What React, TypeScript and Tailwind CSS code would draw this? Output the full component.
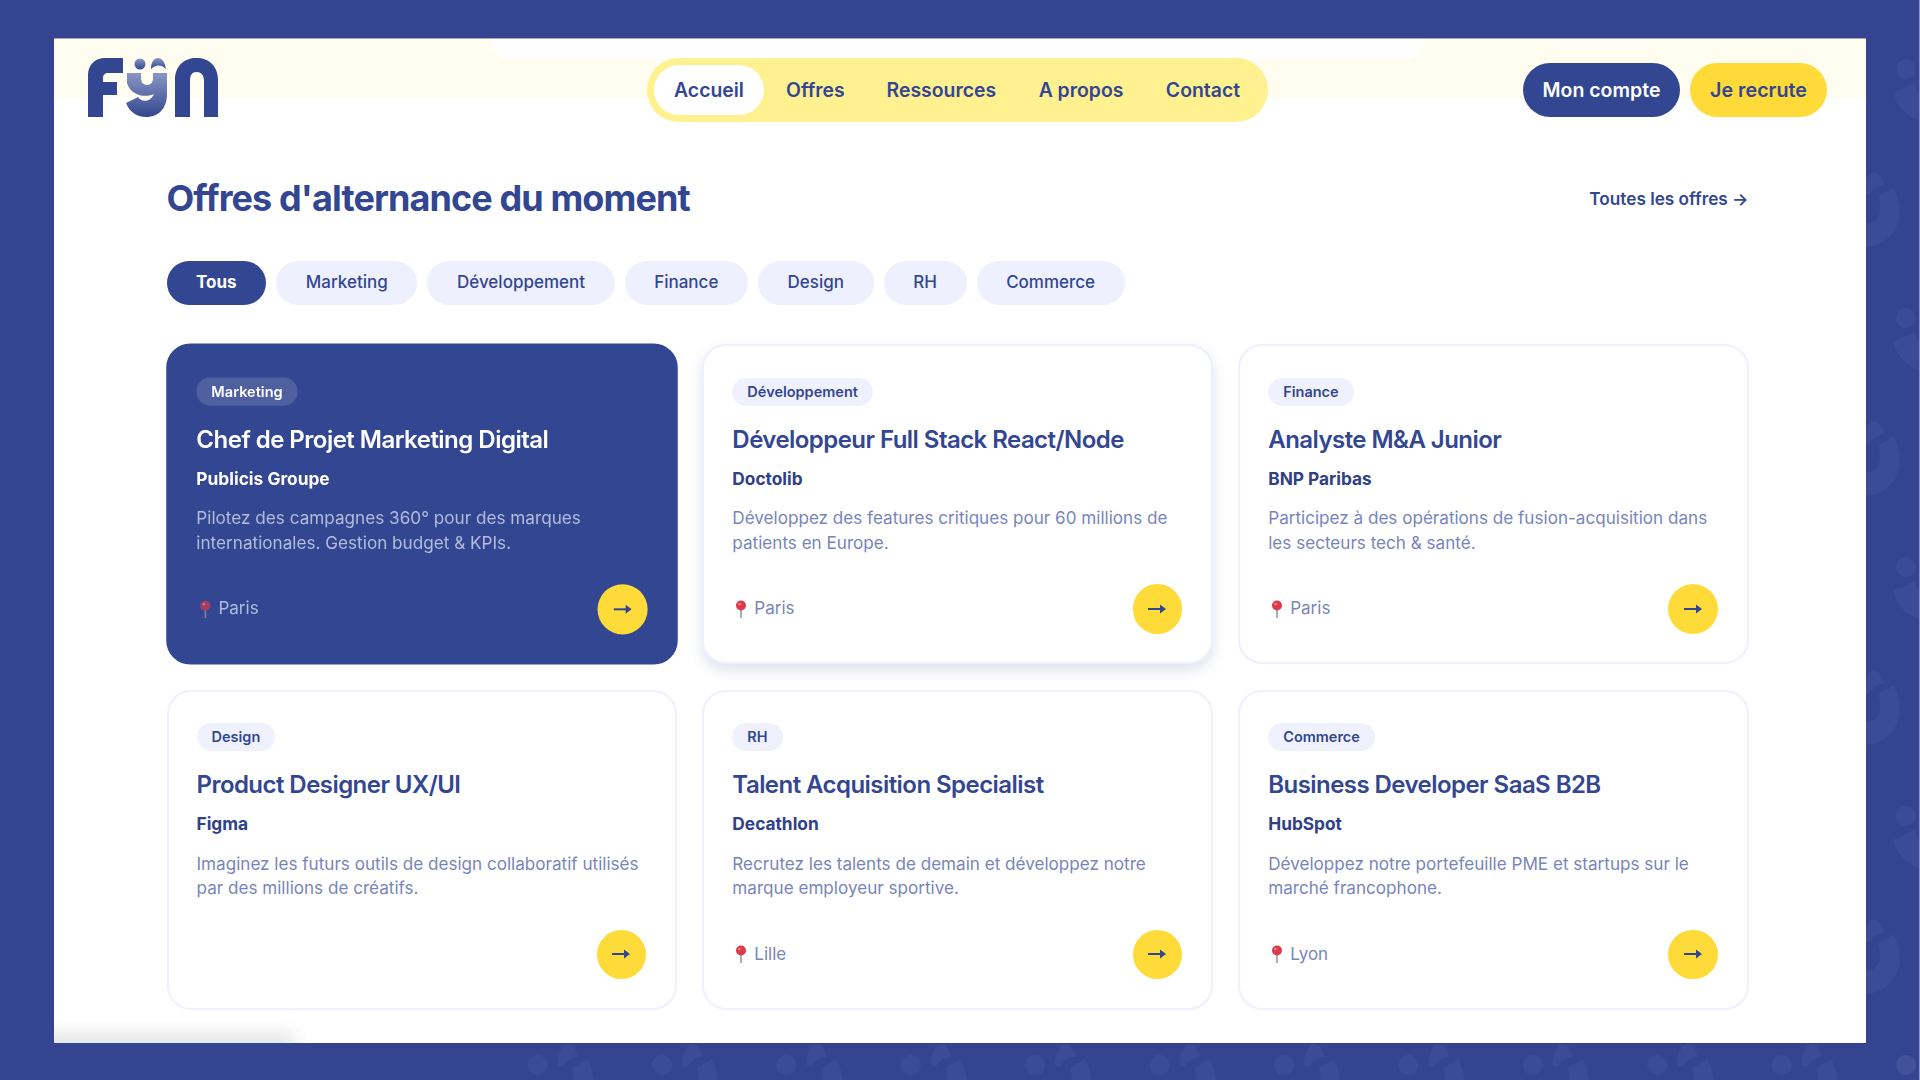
const sans = "font-['Inter','Liberation_Sans',sans-serif]";

const filters = ['Tous', 'Marketing', 'Développement', 'Finance', 'Design', 'RH', 'Commerce'];

type Job = { tag: string; title: string; company: string; desc: [string, string]; city?: string };

const jobs: Job[] = [
  { tag: 'Marketing', title: 'Chef de Projet Marketing Digital', company: 'Publicis Groupe', desc: ['Pilotez des campagnes 360° pour des marques', 'internationales. Gestion budget & KPIs.'], city: 'Paris' },
  { tag: 'Développement', title: 'Développeur Full Stack React/Node', company: 'Doctolib', desc: ['Développez des features critiques pour 60 millions de', 'patients en Europe.'], city: 'Paris' },
  { tag: 'Finance', title: 'Analyste M&A Junior', company: 'BNP Paribas', desc: ['Participez à des opérations de fusion-acquisition dans', 'les secteurs tech & santé.'], city: 'Paris' },
  { tag: 'Design', title: 'Product Designer UX/UI', company: 'Figma', desc: ['Imaginez les futurs outils de design collaboratif utilisés', 'par des millions de créatifs.'] },
  { tag: 'RH', title: 'Talent Acquisition Specialist', company: 'Decathlon', desc: ['Recrutez les talents de demain et développez notre', 'marque employeur sportive.'], city: 'Lille' },
  { tag: 'Commerce', title: 'Business Developer SaaS B2B', company: 'HubSpot', desc: ['Développez notre portefeuille PME et startups sur le', 'marché francophone.'], city: 'Lyon' },
];

function Logo() {
  return (
    <svg width="130" height="60" viewBox="0 0 130 60" className="block">
      <defs>
        <linearGradient id="yg" x1="0" y1="0" x2="0" y2="1">
          <stop offset="0" stopColor="#8b96c4" />
          <stop offset="1" stopColor="#33468f" />
        </linearGradient>
      </defs>
      <path fill="#334692" d="M0 59V17C0 7 7 0 17 0H35V15H20C17 15 15 17 15 20V24H29V37H15V59Z" />
      <g fill="url(#yg)">
        <circle cx="52" cy="6" r="5.5" />
        <path d="M63 11C63 4 66 0 70 0C74 0 77 4 78 11C75 8 73 7.5 70.5 7.5C68 7.5 65.5 9 63 11Z" />
        <path d="M39 15H53V20C53 25 56 27 59 27C62 27 65 25 65 20V15H79V36C79 50 71 59 58 59C50 59 42 55 38 45L50 39C53 44 62 45 66 36C60 39 44 40 39 25Z" />
      </g>
      <path fill="#334692" d="M87 59V22C87 8 96 0 108.5 0C121 0 130 8 130 22V59H116V23C116 17 113 14 108.5 14C104 14 102 17 102 23V59Z" />
    </svg>
  );
}

function Pin({ dim }: { dim: boolean }) {
  return (
    <svg width="12" height="18" viewBox="0 0 12 18" className={`ml-[3px] shrink-0 ${dim ? 'opacity-70' : ''}`}>
      <rect x="5.2" y="8" width="1.6" height="10" fill="#9a9aa2" />
      <circle cx="6" cy="5.5" r="5" fill="#dd3a4a" />
      <circle cx="4.5" cy="4" r="1.3" fill="#f08a92" />
    </svg>
  );
}

function Arrow() {
  return (
    <svg width="18" height="14" viewBox="0 0 18 14">
      <rect x="0" y="6" width="13" height="2" fill="#334692" />
      <path d="M12 2.5L18 7L12 11.5Z" fill="#334692" />
    </svg>
  );
}

function Motif({ x, y }: { x: number; y: number }) {
  return (
    <g transform={`translate(${x} ${y})`}>
      <circle cx="0" cy="0" r="10" />
      <path d="M20 0C20 -10 25 -21 30 -21C36 -21 38 -14 41 -8C36 -8 29 -6 25 2Z" />
      <path d="M-13 24L9 14C11 24 16 30 24 30C34 30 39 20 35 3L50 -6C60 15 58 35 40 48C20 60 -5 50 -13 24Z" />
    </g>
  );
}

function Card({ job, featured }: { job: Job; featured: boolean }) {
  return (
    <div
      className={`flex h-[320px] flex-col rounded-[24px] border-2 pt-[31.5px] pr-[28.5px] pb-[28.4px] pl-[28px] ${
        featured ? 'scale-[1.003] border-[#334692] bg-[#334692]' : 'border-[#eef1fd] bg-white'
      } ${job.tag === 'Développement' ? 'shadow-[0_6px_14px_rgba(51,70,146,0.16)]' : ''}`}
    >
      <div className="flex">
        <span
          className={`flex h-[28px] items-center rounded-full px-[15px] text-[14.5px] font-semibold ${
            featured ? 'bg-[#505f9f] text-white' : 'bg-[#eff2fd] text-[#334692]'
          }`}
        >
          {job.tag}
        </span>
      </div>
      <h3 className={`mt-[17px] text-[24px] leading-[34px] font-semibold tracking-[-0.55px] ${featured ? 'text-white' : 'text-[#334692]'}`}>
        {job.title}
      </h3>
      <p className={`mt-[11px] text-[17.3px] leading-[22px] font-bold ${featured ? 'text-white' : 'text-[#2f4189]'}`}>{job.company}</p>
      <p className={`mt-[16.5px] text-[17.1px] leading-[24.6px] ${featured ? 'text-[#b4bcdd]' : 'text-[#7885bb]'}`}>
        {job.desc[0]}
        <br />
        {job.desc[1]}
      </p>
      <div className="mt-auto flex items-center justify-between">
        <div className={`flex items-center gap-[7px] text-[17px] ${featured ? 'text-[#b4bcdd]' : 'text-[#7885bb]'}`}>
          {job.city && <Pin dim={featured} />}
          {job.city}
        </div>
        <div className="flex h-[49.6px] w-[49.6px] items-center justify-center rounded-full bg-[#ffdb3a]">
          <Arrow />
        </div>
      </div>
    </div>
  );
}

export default function App() {
  return (
    <div className={`relative flex h-[1080px] w-[1920px] justify-center overflow-hidden bg-[#354491] ${sans}`}>
      <svg className="absolute inset-0" width="1920" height="1080">
        <defs>
          <pattern id="bgp" x="1886" y="39" width="124.4" height="249" patternUnits="userSpaceOnUse">
            <g fill="#ffffff" fillOpacity="0.035">
              <Motif x={20} y={30} />
              <Motif x={82.2} y={154.5} />
              <Motif x={-42.2} y={154.5} />
            </g>
          </pattern>
        </defs>
        <rect x="1866" y="55" width="54" height="1025" fill="url(#bgp)" />
        <rect x="520" y="1043" width="1400" height="37" fill="url(#bgp)" />
        <rect x="1919" y="0" width="1" height="1080" fill="#8c96c8" />
      </svg>
      <main className="relative mt-[38px] h-[1005px] w-[1812px] overflow-hidden border-t border-[#a9aab5] bg-white text-[#334692]">
        <div className="absolute inset-x-0 top-0 h-[59px] bg-[#fffdf0]" />
        <div className="absolute top-0 left-[436px] h-[20px] w-[934px] rounded-b-[20px] bg-white" />
        <div className="absolute -bottom-[10px] left-[-10px] h-[20px] w-[250px] bg-[#e4e4e4] blur-[8px]" />

        <header className="relative flex h-[84px] items-start justify-between pt-[19px] pr-[39px] pl-[34px]">
          <Logo />
          <div className="flex items-center gap-[10px] pt-[5px]">
            <button className="flex h-[54px] w-[157px] items-center justify-center rounded-full bg-[#334692] pt-[1px] text-[19.5px] font-semibold text-white">
              Mon compte
            </button>
            <button className="flex h-[54px] w-[137px] items-center justify-center rounded-full bg-[#ffdb3a] pt-[1px] text-[19.7px] font-semibold text-[#334692]">
              Je recrute
            </button>
          </div>
          <nav className="absolute top-[19px] left-[593px] flex h-[64px] w-[621px] items-center rounded-full bg-[#fff090] px-[7px] text-[19.4px] font-semibold">
            <span className="flex h-[50px] w-[110px] items-center justify-center rounded-full bg-white pt-[1px]">Accueil</span>
            <span className="ml-[22px] pt-[1px]">Offres</span>
            <span className="ml-[42px] pt-[1px]">Ressources</span>
            <span className="ml-[42.5px] pt-[1px]">A propos</span>
            <span className="ml-[42.5px] pt-[1px]">Contact</span>
          </nav>
        </header>

        <div className="relative mx-[112.5px] w-[1582px]">
          <div className="mt-[53px] flex items-center justify-between">
            <h1 className="text-[36px] leading-[44px] font-bold tracking-[-0.9px]">Offres d&apos;alternance du moment</h1>
            <a className="pt-[2px] text-[17.2px] font-semibold">Toutes les offres →</a>
          </div>
          <div className="mt-[40.5px] flex gap-[10px]">
            {filters.map((f, i) => (
              <span
                key={f}
                className={`flex h-[44px] items-center rounded-full px-[29.6px] pt-[1px] text-[17px] ${
                  i === 0 ? 'bg-[#334692] font-bold text-white' : 'bg-[#eef1fd] font-medium text-[#334692]'
                }`}
              >
                {f}
              </span>
            ))}
          </div>
          <div className="mt-[39.5px] grid grid-cols-3 gap-[25.6px]">
            {jobs.map((j, i) => (
              <Card key={j.title} job={j} featured={i === 0} />
            ))}
          </div>
        </div>
      </main>
    </div>
  );
}
